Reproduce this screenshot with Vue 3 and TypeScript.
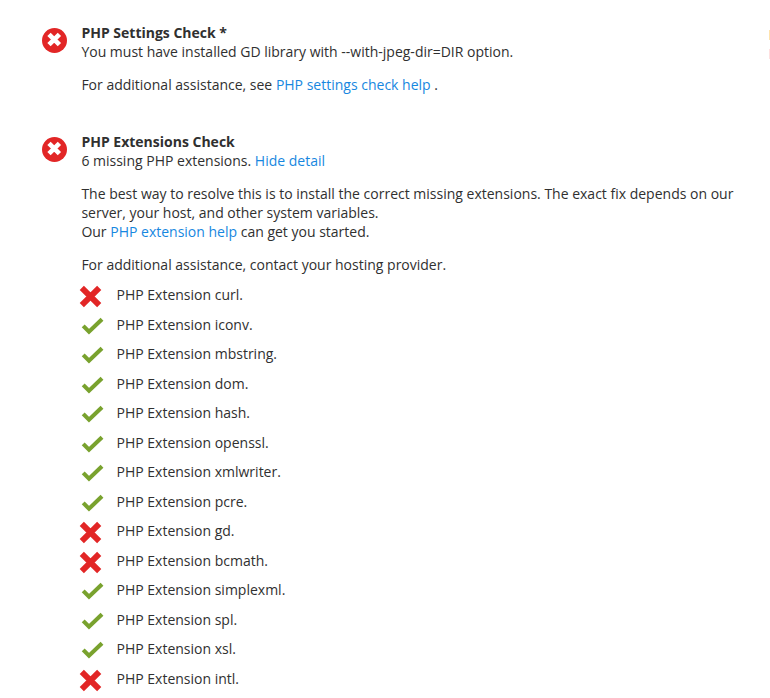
<script setup lang="ts">
interface Extension {
  name: string
  ok: boolean
}

const extensions: Extension[] = [
  { name: 'curl', ok: false },
  { name: 'iconv', ok: true },
  { name: 'mbstring', ok: true },
  { name: 'dom', ok: true },
  { name: 'hash', ok: true },
  { name: 'openssl', ok: true },
  { name: 'xmlwriter', ok: true },
  { name: 'pcre', ok: true },
  { name: 'gd', ok: false },
  { name: 'bcmath', ok: false },
  { name: 'simplexml', ok: true },
  { name: 'spl', ok: true },
  { name: 'xsl', ok: true },
  { name: 'intl', ok: false },
]
</script>

<template>
  <main class="page">
    <section class="check settings">
      <svg class="status" viewBox="0 0 25 25" aria-hidden="true">
        <circle cx="12.5" cy="12.5" r="12.5" fill="#e22626" />
        <path d="M7 6.3 17.4 16.7M17.4 6.3 7 16.7" stroke="#fff" stroke-width="4.7" />
      </svg>
      <div class="body">
        <h3>PHP Settings Check *</h3>
        <p>You must have installed GD library with --with-jpeg-dir=DIR option.</p>
        <p class="spaced">For additional assistance, see <a>PHP settings check help</a> .</p>
      </div>
    </section>

    <section class="check">
      <svg class="status" viewBox="0 0 25 25" aria-hidden="true">
        <circle cx="12.5" cy="12.5" r="12.5" fill="#e22626" />
        <path d="M7 6.3 17.4 16.7M17.4 6.3 7 16.7" stroke="#fff" stroke-width="4.7" />
      </svg>
      <div class="body">
        <h3>PHP Extensions Check</h3>
        <p>6 missing PHP extensions. <a>Hide detail</a></p>
        <p class="spaced">
          The best way to resolve this is to install the correct missing extensions. The exact fix depends on our<br />
          server, your host, and other system variables.<br />
          Our <a>PHP extension help</a> can get you started.
        </p>
        <p class="spaced">For additional assistance, contact your hosting provider.</p>
        <ul>
          <li v-for="ext in extensions" :key="ext.name">
            <svg v-if="ext.ok" class="mark" viewBox="0 0 25 24" aria-hidden="true">
              <path d="M4.2 10.9 10 16.7 23 4.3" fill="none" stroke="#79a22e" stroke-width="4.1" />
            </svg>
            <svg v-else class="mark" viewBox="0 0 25 24" aria-hidden="true">
              <path d="M2.8 2.8 20.2 20.2M20.2 2.8 2.8 20.2" stroke="#e22626" stroke-width="5.9" />
            </svg>
            <span>PHP Extension {{ ext.name }}.</span>
          </li>
        </ul>
      </div>
    </section>

    <div class="edge">
      <i class="warn"></i>
      <i class="error"></i>
    </div>
  </main>
</template>

<style>
body {
  background: #fff;
}
</style>

<style scoped>
.page {
  position: relative;
  box-sizing: border-box;
  width: 770px;
  height: 698px;
  padding: 23px 0 0 42px;
  overflow: hidden;
  background: #fff;
  color: #303030;
  font: 14px/19px "Open Sans", sans-serif;
}
.check {
  display: flex;
  gap: 14.4px;
}
.settings {
  margin-bottom: 38px;
}
.status {
  flex: none;
  width: 25px;
  height: 25px;
  margin-top: 5px;
}
.body {
  white-space: nowrap;
}
h3,
p,
ul {
  margin: 0;
  padding: 0;
}
h3 {
  font-size: 14px;
  line-height: 19px;
  font-weight: 700;
}
.spaced {
  margin-top: 14px;
}
a {
  color: #1787e0;
}
ul {
  margin-top: 6px;
  list-style: none;
}
li {
  display: flex;
  gap: 12.5px;
  height: 29.5px;
  line-height: 29px;
}
.mark {
  flex: none;
  width: 25px;
  height: 24px;
  margin: 5px 0 0 -2.4px;
}
.edge {
  position: absolute;
  top: 30px;
  right: 0;
  display: grid;
  gap: 9px;
}
.edge i {
  width: 1px;
  height: 10px;
}
.warn {
  background: #ffe3ad;
}
.error {
  background: #ffe0e0;
}
</style>
